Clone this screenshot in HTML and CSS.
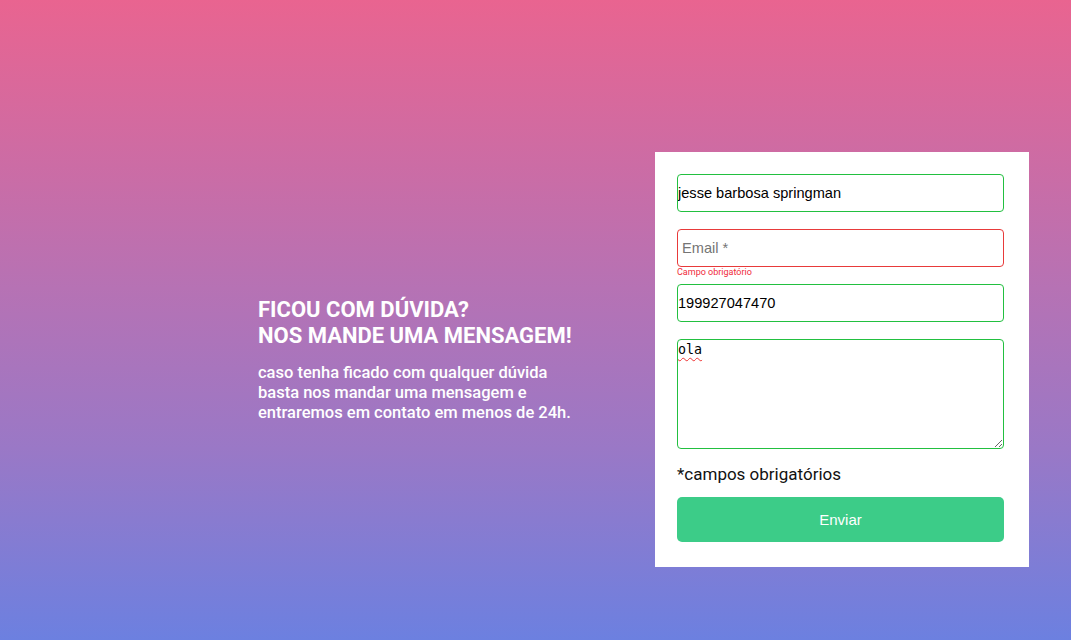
FILE: index.html
```html
<!DOCTYPE html>
<html lang="pt-BR">
<head>
<meta charset="utf-8">
<title>Contato</title>
<link rel="stylesheet" href="styles.css">
</head>
<body>
<main class="page">
  <section class="intro">
    <h2 class="intro-title">FICOU COM DÚVIDA?<br>NOS MANDE UMA MENSAGEM!</h2>
    <p class="intro-text">caso tenha ficado com qualquer dúvida<br>basta nos mandar uma mensagem e<br>entraremos em contato em menos de 24h.</p>
  </section>
  <form class="card">
    <div class="field">
      <input class="input valid" type="text" value="jesse barbosa springman">
    </div>
    <div class="field">
      <input class="input invalid pad" type="email" placeholder="Email *">
      <span class="error">Campo obrigatório</span>
    </div>
    <div class="field">
      <input class="input valid" type="text" value="199927047470">
    </div>
    <div class="field">
      <textarea class="textarea valid">ola</textarea>
    </div>
    <p class="required">*campos obrigatórios</p>
    <button class="submit" type="button">Enviar</button>
  </form>
</main>
</body>
</html>
```
FILE: styles.css
```css
* { box-sizing: border-box; }
html, body { margin: 0; padding: 0; }
body {
  width: 1071px;
  height: 640px;
  overflow: hidden;
  background: linear-gradient(180deg, #e96490 0%, #b672b4 45%, #9a78c6 70%, #6c80e0 100%);
  font-family: Roboto, "Noto Sans", sans-serif;
}
.page {
  height: 640px;
  display: flex;
  align-items: center;
  padding-top: 79px;
  padding-left: 258px;
}
.intro { color: #fff; width: 340px; }
.intro-title {
  margin: 0;
  font-size: 22px;
  line-height: 26px;
  font-weight: 700;
}
.intro-text {
  margin: 14px 0 0;
  font-size: 16.5px;
  line-height: 20px;
  font-weight: 500;
}
.card {
  margin-left: auto;
  margin-right: 42px;
  width: 374px;
  background: #fff;
  padding: 22px 25px 25px 22px;
  display: flex;
  flex-direction: column;
}
.field {
  position: relative;
  height: 38px;
  margin-bottom: 17px;
}
.field:nth-child(4) { height: 110px; margin-bottom: 0; }
.input, .textarea {
  display: block;
  width: 327px;
  height: 38px;
  border-radius: 4px;
  border: 1px solid #22c040;
  padding: 0;
  font-family: "Liberation Sans", Arial, sans-serif;
  font-size: 14.6px;
  color: #000;
  background: #fff;
  outline: none;
}
.input.pad { padding-left: 4px; }
.input.invalid { border-color: #e83a3a; }
.input::placeholder { color: #757575; }
.textarea {
  height: 110px;
  font-family: "DejaVu Sans Mono", "Liberation Mono", monospace;
  font-size: 13.33px;
  padding: 2px 0;
  resize: vertical;
  text-decoration: underline wavy #e33;
  text-decoration-skip-ink: none;
  text-underline-offset: 3px;
  text-decoration-thickness: 1px;
}
.error {
  position: absolute;
  left: 0;
  top: 38px;
  font-family: Roboto, sans-serif;
  font-size: 9px;
  line-height: 10px;
  color: #f02a3a;
}
.required {
  margin: 15px 0 0;
  font-size: 17px;
  line-height: 20px;
  font-weight: 400;
  color: #111;
}
.submit {
  margin-top: 13px;
  width: 327px;
  height: 45px;
  border: 0;
  border-radius: 5px;
  background: #3ccc88;
  color: #fff;
  font-family: "Liberation Sans", Arial, sans-serif;
  font-size: 15px;
}
```
